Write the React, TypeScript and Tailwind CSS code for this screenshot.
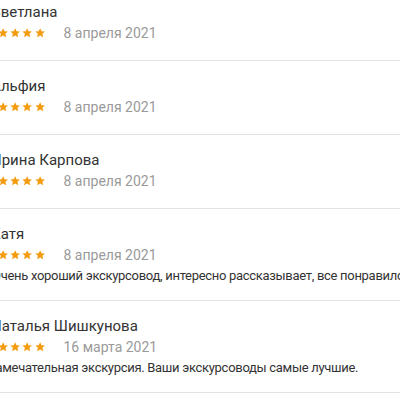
const reviews = [
    { name: 'Светлана', date: '8 апреля 2021' },
    { name: 'Альфия', date: '8 апреля 2021' },
    { name: 'Ирина Карпова', date: '8 апреля 2021' },
    {
        name: 'Катя',
        date: '8 апреля 2021',
        text: 'Очень хороший экскурсовод, интересно рассказывает, все понравилось.',
        shift: 'ml-[1px]',
    },
    {
        name: 'Наталья Шишкунова',
        date: '16 марта 2021',
        text: 'Замечательная экскурсия. Ваши экскурсоводы самые лучшие.',
        shift: '-ml-[3px]',
    },
];

const Star = () => (
    <svg viewBox="0 0 12 12" className="w-[12.3px] h-[12px] shrink-0">
        <path
            d="M6 1.2l1.45 3.05 3.35.35-2.5 2.25.72 3.3L6 8.45 2.98 10.15l.72-3.3-2.5-2.25 3.35-.35z"
            fill="#f39c12"
        />
    </svg>
);

const App = () => {
    return (
        <div
            className="w-[400px] h-[400px] overflow-hidden bg-white"
            style={{ fontFamily: 'Roboto, "Noto Sans", sans-serif' }}
        >
            <div className="-mt-[13px] -ml-[9px]">
                {reviews.map((r) => (
                    <div
                        key={r.name}
                        className={`border-b border-[#e2e2e2] pt-[14px] ${r.text ? 'pb-[14px]' : 'pb-[17px]'}`}
                    >
                        <div className="text-[15px] leading-[22px] text-[#333333]">{r.name}</div>
                        <div className="flex items-center h-[20px]">
                            <div className="flex -ml-[6.5px] w-[79px]">
                                <Star />
                                <Star />
                                <Star />
                                <Star />
                                <Star />
                            </div>
                            <span className="text-[14px] leading-[20px] text-[#9a9a9a]">{r.date}</span>
                        </div>
                        {r.text && (
                            <div
                                className={`text-[13px] leading-[21px] tracking-[-0.3px] text-[#333333] whitespace-nowrap ${r.shift}`}
                            >
                                {r.text}
                            </div>
                        )}
                    </div>
                ))}
            </div>
        </div>
    );
};

export default App;
